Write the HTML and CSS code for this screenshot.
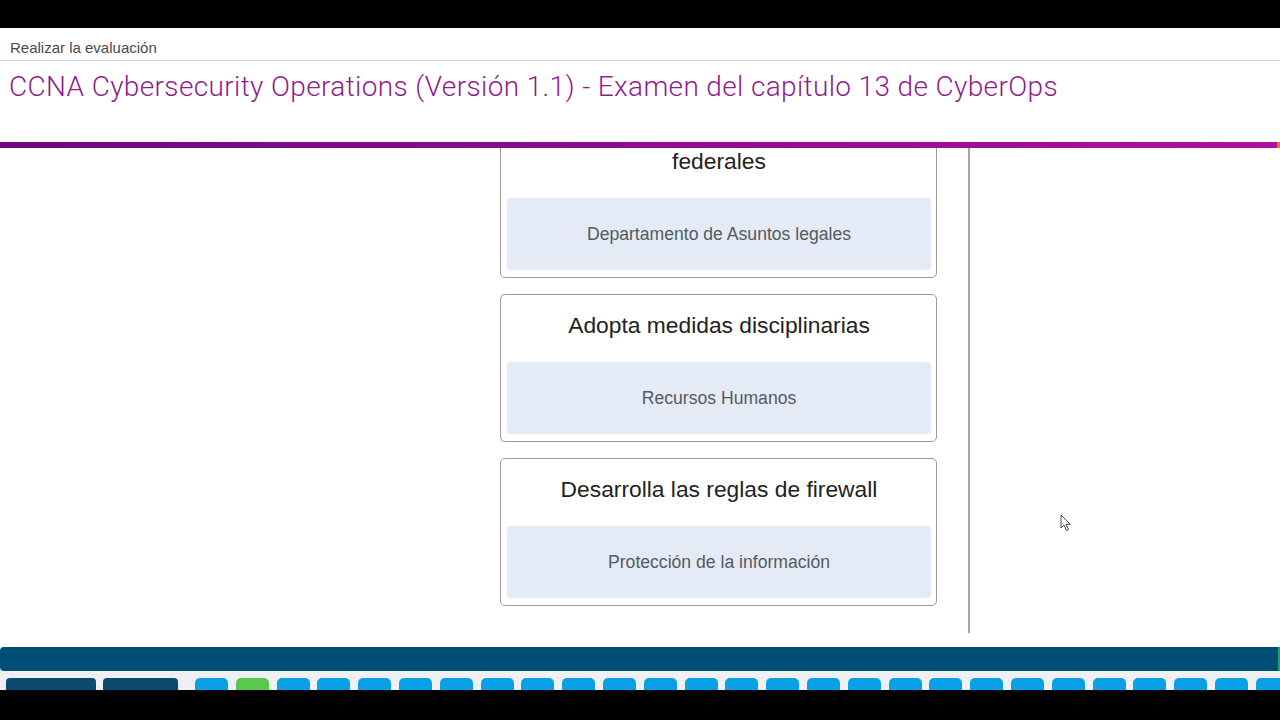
FILE: index.html
```html
<!DOCTYPE html>
<html lang="es">
<head>
<meta charset="utf-8">
<title>Realizar la evaluación</title>
<link rel="stylesheet" href="styles.css">
</head>
<body>
<div class="topblack"></div>
<header class="header">
  <div class="crumb">Realizar la evaluación</div>
  <h1 class="title">CCNA Cybersecurity Operations (Versión 1.1) - Examen del capítulo 13 de CyberOps</h1>
</header>
<div class="purplebar"><span class="endcap"></span></div>
<main class="content">
  <div class="cards">
    <div class="card">
      <div class="card-title">Revisa las políticas por infracciones<br>federales</div>
      <div class="card-answer">Departamento de Asuntos legales</div>
    </div>
    <div class="card">
      <div class="card-title">Adopta medidas disciplinarias</div>
      <div class="card-answer">Recursos Humanos</div>
    </div>
    <div class="card">
      <div class="card-title">Desarrolla las reglas de firewall</div>
      <div class="card-answer">Protección de la información</div>
    </div>
  </div>
  <div class="vline"></div>
  <svg class="cursor" width="12" height="18" viewBox="0 0 12 18"><path d="M1 1 L1 14 L4 11 L6.5 16.5 L8.5 15.6 L6 10.3 L10.3 10.3 Z" fill="#fff" stroke="#333" stroke-width="0.9" stroke-linejoin="round"/></svg>
</main>
<div class="navbar"><span class="navbar-end"></span></div>
<nav class="strip">
  <span class="btn-dark b1"></span>
  <span class="btn-dark b2"></span>
  <div class="qbtns">
    <span class="q"></span><span class="q done"></span><span class="q"></span><span class="q"></span><span class="q"></span><span class="q"></span><span class="q"></span><span class="q"></span><span class="q"></span><span class="q"></span><span class="q"></span><span class="q"></span><span class="q"></span><span class="q"></span><span class="q"></span><span class="q"></span><span class="q"></span><span class="q"></span><span class="q"></span><span class="q"></span><span class="q"></span><span class="q"></span><span class="q"></span><span class="q"></span><span class="q"></span><span class="q"></span><span class="q"></span><span class="q"></span>
  </div>
</nav>
<div class="bottomblack"></div>
</body>
</html>
```

FILE: styles.css
```css
* { box-sizing: border-box; }
html, body { margin: 0; padding: 0; }
body {
  width: 1280px;
  height: 720px;
  overflow: hidden;
  background: #fff;
  font-family: "Liberation Sans", Arial, sans-serif;
}
.topblack { height: 28px; background: #000; }
.bottomblack { height: 30px; background: #000; }

.header { height: 114px; background: #fff; }
.crumb {
  height: 33px;
  border-bottom: 1px solid #d6d6d6;
  padding: 12px 0 0 10px;
  font-size: 15px;
  line-height: 16px;
  color: #4a4a4a;
}
.title {
  margin: 0;
  padding: 8px 0 0 9px;
  font-family: Roboto, "Liberation Sans", sans-serif;
  font-weight: 300;
  font-size: 28px;
  letter-spacing: 0.36px;
  line-height: 36px;
  color: #8f1d8c;
  white-space: nowrap;
}

.purplebar {
  height: 6px;
  background: linear-gradient(to right, #6c0a7c 0%, #8a0b8a 40%, #b10da0 100%);
  display: flex;
  justify-content: flex-end;
}
.endcap { width: 3px; height: 6px; background: #c9870d; }

.content {
  position: relative;
  height: 499px;
  overflow: hidden;
  display: flex;
  align-items: flex-start;
  padding-left: 500px;
}
.cards {
  width: 437px;
  margin-top: -44px;
  display: flex;
  flex-direction: column;
  gap: 16px;
}
.card {
  border: 1px solid #9a9a9a;
  border-radius: 5px;
  padding: 0 5px 7px 6px;
  background: #fff;
}
.card-title {
  padding: 17px 0 24px;
  text-align: center;
  font-size: 22.8px;
  line-height: 26px;
  color: #222;
}
.card-answer {
  height: 72px;
  border-radius: 4px;
  background: #e4ebf6;
  box-shadow: 0 0 2px #eef2f8;
  display: flex;
  align-items: center;
  justify-content: center;
  font-size: 17.6px;
  color: #555a60;
}
.vline {
  width: 2px;
  height: 485px;
  margin-left: 31px;
  background: #ab9dab;
}
.cursor { position: absolute; left: 1060px; top: 366px; }

.navbar {
  height: 24px;
  background: #004e76;
  border-radius: 4px 0 0 4px;
  display: flex;
  justify-content: flex-end;
}
.navbar-end { width: 2px; background: #1aa37a; }

.strip {
  height: 19px;
  background: #eef0f4;
  overflow: hidden;
  display: flex;
  align-items: flex-start;
  padding: 7px 0 0 6px;
}
.btn-dark {
  height: 20px;
  background: #0c4a70;
  border-radius: 4px;
  flex: none;
}
.b1 { width: 90px; margin-right: 7px; }
.b2 { width: 75px; margin-right: 17px; }
.qbtns { display: flex; gap: 7.8px; }
.q {
  flex: none;
  width: 33px;
  height: 20px;
  background: #0aa0e6;
  border-radius: 5px;
}
.q.done { background: #5ac84c; }
```
